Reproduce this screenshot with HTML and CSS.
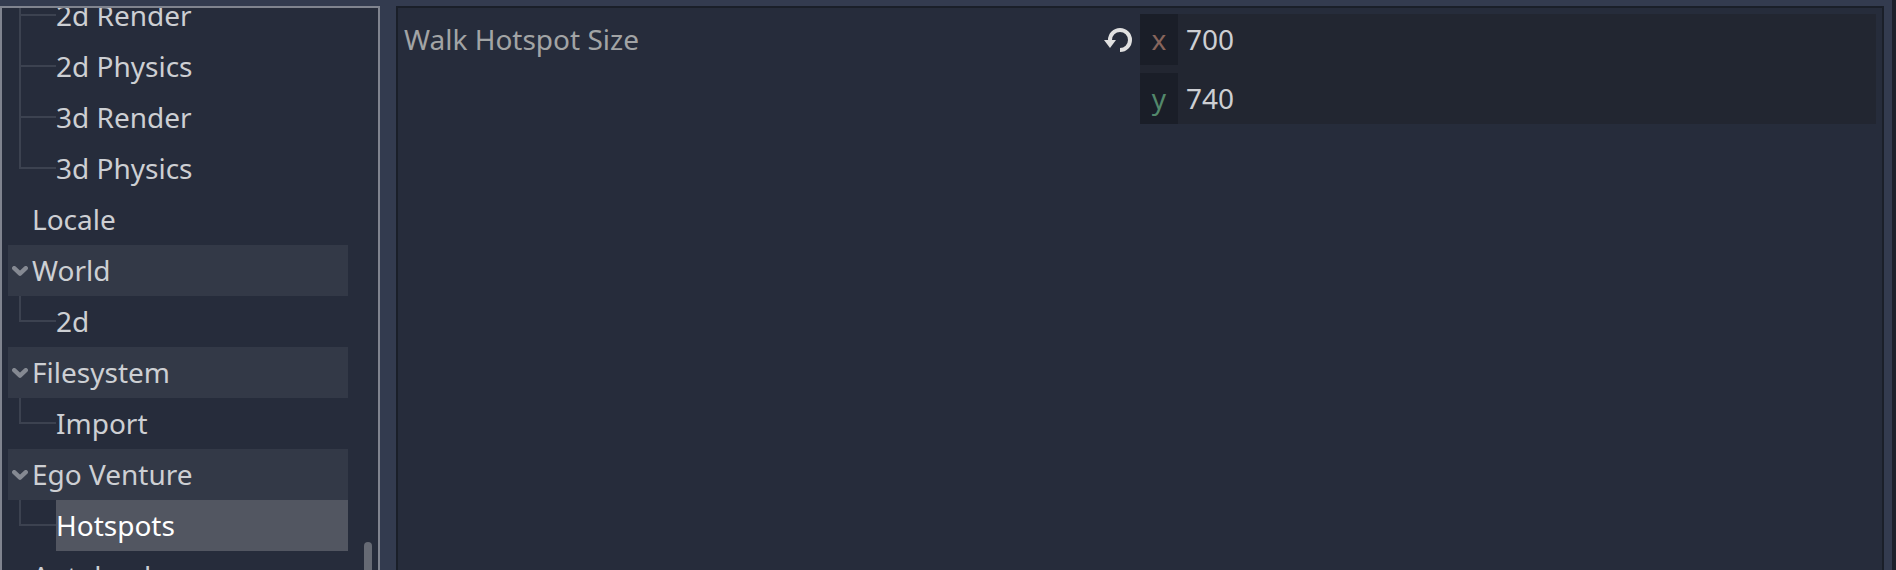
FILE: index.html
```html
<!DOCTYPE html>
<html lang="en">
<head>
<meta charset="utf-8">
<title>Project Settings</title>
<link rel="stylesheet" href="styles.css">
</head>
<body>
<div class="window">
  <nav class="tree">
    <div class="rows">
      <div class="row child more">2d Render</div>
      <div class="row child more">2d Physics</div>
      <div class="row child more">3d Render</div>
      <div class="row child">3d Physics</div>
      <div class="row top">Locale</div>
      <div class="row section"><svg class="arrow" viewBox="0 0 16 10"><path d="M2.2 2.2L8 7.6l5.8-5.4"/></svg>World</div>
      <div class="row child">2d</div>
      <div class="row section"><svg class="arrow" viewBox="0 0 16 10"><path d="M2.2 2.2L8 7.6l5.8-5.4"/></svg>Filesystem</div>
      <div class="row child">Import</div>
      <div class="row section"><svg class="arrow" viewBox="0 0 16 10"><path d="M2.2 2.2L8 7.6l5.8-5.4"/></svg>Ego Venture</div>
      <div class="row child"><span class="selected">Hotspots</span></div>
      <div class="row top">Autoload</div>
    </div>
    <div class="scrollbar"></div>
  </nav>
  <main class="inspector">
    <div class="label">Walk Hotspot Size</div>
    <svg class="reset" viewBox="0 0 28 24"><path class="arc" d="M16 22a10 10 0 1 0-10-10"/><path class="head" d="M0 12h12l-6 8z"/></svg>
    <div class="vector">
      <div class="field"><span class="axis axis-x">x</span><span class="value">700</span></div>
      <div class="field"><span class="axis axis-y">y</span><span class="value">740</span></div>
    </div>
  </main>
  <div class="edge"></div>
</div>
</body>
</html>
```
FILE: styles.css
```css
*, *::before, *::after { box-sizing: border-box; }

body {
  margin: 0;
  overflow: hidden;
  background: #333b4f;
  color: #cdcfd3;
  font: 28px/51px "Noto Sans", sans-serif;
}

.window {
  display: grid;
  grid-template-columns: 380px 1488px 4px;
  column-gap: 16px;
  height: 570px;
}

.window .edge {
  margin-left: -8px;
  width: 4px;
  background: #1c212c;
}

.tree {
  display: flex;
  justify-content: space-between;
  margin-top: 6px;
  height: 570px;
  padding: 0 6px;
  border: 2px solid #80848f;
  background: #262c3b;
  overflow: hidden;
}

.rows {
  width: 340px;
  margin-top: -18px;
}

.row {
  position: relative;
  height: 51px;
  white-space: nowrap;
}

.top { padding-left: 24px; }

.child { padding-left: 40px; }

.child {
  padding-left: 48px;
}

.child::before {
  content: "";
  position: absolute;
  left: 11px;
  top: 0;
  width: 37px;
  height: 26px;
  border: solid #3c4250;
  border-width: 0 0 2px 2px;
}

.more::after {
  content: "";
  position: absolute;
  left: 11px;
  top: 26px;
  width: 2px;
  height: 25px;
  background: #3c4250;
}

.section {
  display: flex;
  align-items: center;
  gap: 4px;
  padding-left: 4px;
  background: #333947;
}

.arrow {
  width: 16px;
  height: 10px;
  fill: none;
  stroke: #858992;
  stroke-width: 4.4;
  stroke-linecap: round;
  stroke-linejoin: round;
}

.selected {
  display: block;
  background: #525661;
  color: #fff;
}

.scrollbar {
  width: 8px;
  height: 60px;
  margin-top: 534px;
  border-radius: 4px;
  background: #666a74;
}

.inspector {
  display: grid;
  grid-template-columns: 700px 28px 744px;
  align-items: start;
  margin-top: 6px;
  height: 570px;
  padding: 6px;
  border: 2px solid #1a1f29;
  background: #262c3b;
}

.label { color: #a2a4a5; }

.reset {
  width: 28px;
  height: 24px;
  margin-top: 14px;
}

.arc {
  fill: none;
  stroke: #e0e0e0;
  stroke-width: 4;
}

.head { fill: #e0e0e0; }

.vector {
  display: flex;
  flex-direction: column;
  gap: 8px;
  margin-left: 8px;
  width: 736px;
  background: #222631;
}

.field {
  display: flex;
  gap: 8px;
}

.axis {
  width: 38px;
  text-align: center;
  background: #1a1e28;
}

.axis-x { color: #87655c; }

.axis-y { color: #53886b; }
```
